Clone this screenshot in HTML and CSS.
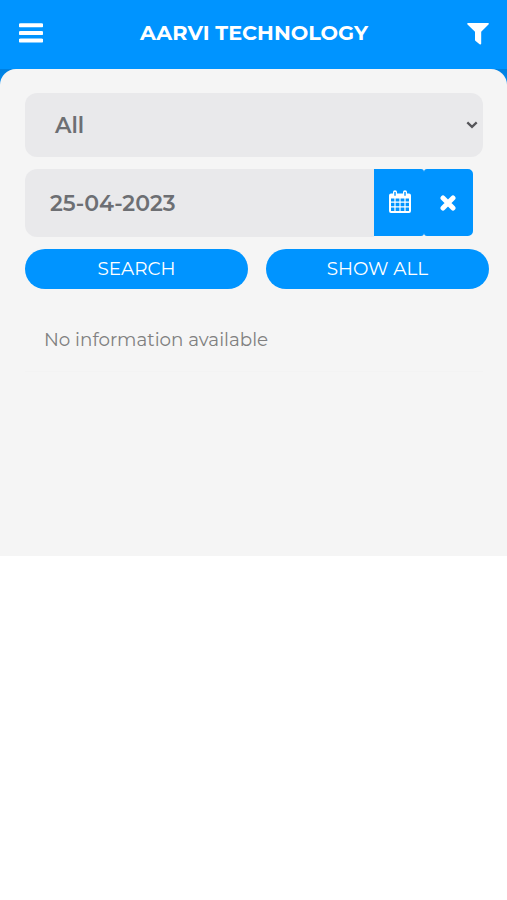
FILE: index.html
```html
<!DOCTYPE html>
<html lang="en">
<head>
<meta charset="utf-8">
<title>AARVI TECHNOLOGY</title>
<link rel="stylesheet" href="styles.css">
</head>
<body>
<header class="topbar">
  <svg class="menu" viewBox="0 0 24 21" width="24" height="21"><path d="M1.500 2.300h21M1.500 9.900h21M1.500 17.500h21" stroke="#fff" stroke-width="4" stroke-linecap="round"/></svg>
  <h1 class="title">AARVI TECHNOLOGY</h1>
  <svg class="filter" viewBox="0 0 22 22" width="22" height="22"><path d="M1 0h20q1.500 .3.500 1.500L14.200 8.800V20.800q-.5 1.200-1.600.4L8.300 17.700Q8 17.300 8 16.800V8.800L.5 1.500Q-.3.300 1 0z" fill="#fff"/></svg>
</header>
<div class="stage">
  <main class="panel">
    <div class="field select"><span class="all">All</span>
      <svg viewBox="0 0 12 8" width="12" height="8"><path d="M1.300 1.400 6 5.800l4.700-4.400" fill="none" stroke="#56565a" stroke-width="2.300"/></svg>
    </div>
    <div class="daterow">
      <div class="field date"><span>25-04-2023</span></div>
      <button class="addon" aria-label="Calendar"><svg viewBox="0 0 22 24" width="22" height="24">
        <path fill="#fff" fill-rule="evenodd" d="M2 3.500h2V2q0-1.700 2-1.700T8 2v1.500h6V2q0-1.700 2-1.700T18 2v1.500h2q2 0 2 2V21q0 2-2 2H2q-2 0-2-2V5.500q0-2 2-2zM5.300 2v3.800h1.400V2zM15.300 2v3.800h1.400V2zM2 8.500v3h3.400v-3zm4.600 0v3h3.800v-3zm5 0v3h3.800v-3zm5 0v3H20v-3zM2 12.700v3.600h3.400v-3.600zm4.600 0v3.600h3.800v-3.600zm5 0v3.600h3.800v-3.600zm5 0v3.600H20v-3.600zM2 17.500v3.400h3.400v-3.400zm4.600 0v3.400h3.800v-3.400zm5 0v3.400h3.800v-3.400zm5 0v3.400H20v-3.400z"/>
      </svg></button>
      <button class="addon clear" aria-label="Clear"><svg viewBox="0 0 16 16" width="16" height="16"><path d="M3 3l10 10M13 3 3 13" stroke="#fff" stroke-width="5" stroke-linecap="round"/></svg></button>
    </div>
    <div class="actions">
      <button class="pill">SEARCH</button>
      <button class="pill">SHOW ALL</button>
    </div>
    <p class="empty">No information available</p>
  </main>
</div>
</body>
</html>
```
FILE: styles.css
```css
* { box-sizing: border-box; }
body { margin: 0; background: #fff; font-family: Montserrat, Inter, "Liberation Sans", sans-serif; }
button { border: 0; padding: 0; font: inherit; color: #fff; background: #0094ff; }
svg { display: block; flex: none; }
.topbar { height: 69px; padding: 0 18px 3px 19px; display: flex; align-items: center; justify-content: space-between; background: #0094ff; }
.title { margin: 0 0 0 -2px; font-size: 20.75px; line-height: 26px; font-weight: 700; color: #fff; white-space: nowrap; }
.filter { margin-top: 2px; }
.stage { background: linear-gradient(#0080e0, #008cf2 16px, #f5f5f5 16px); }
.panel { height: 487px; padding: 24px 18px 0 25px; border-radius: 16px 16px 0 0; background: #f5f5f5; }
.field { display: flex; align-items: center; background: #e9e9eb; color: #6d6f73; font-size: 22px; font-weight: 600; white-space: nowrap; }
.select { width: 458px; height: 64px; padding: 0 5px 0 30px; border-radius: 12px; justify-content: space-between; }
.daterow { display: flex; margin-top: 12px; height: 68px; align-items: flex-start; }
.date { width: 349px; height: 68px; padding-left: 25px; border-radius: 12px 0 0 12px; }
.addon { width: 50px; height: 67px; padding: 0 0 1px 1px; display: flex; align-items: center; justify-content: center; border-radius: 0 3px 3px 0; }
.addon.clear { width: 49px; padding: 0 1px 0 0; border-radius: 3px 5px 5px 3px; }
.actions { display: flex; gap: 18px; margin-top: 12px; }
.pill { width: 223px; height: 40px; border-radius: 20px; font-size: 18.4px; line-height: 39px; padding-bottom: 1px; white-space: nowrap; }
.empty { width: 458px; margin: 0; height: 83px; padding: 38px 0 0 19px; border-bottom: 1px solid #f3f3f3; font-size: 18.3px; line-height: 25px; color: #808080; white-space: nowrap; }
```
